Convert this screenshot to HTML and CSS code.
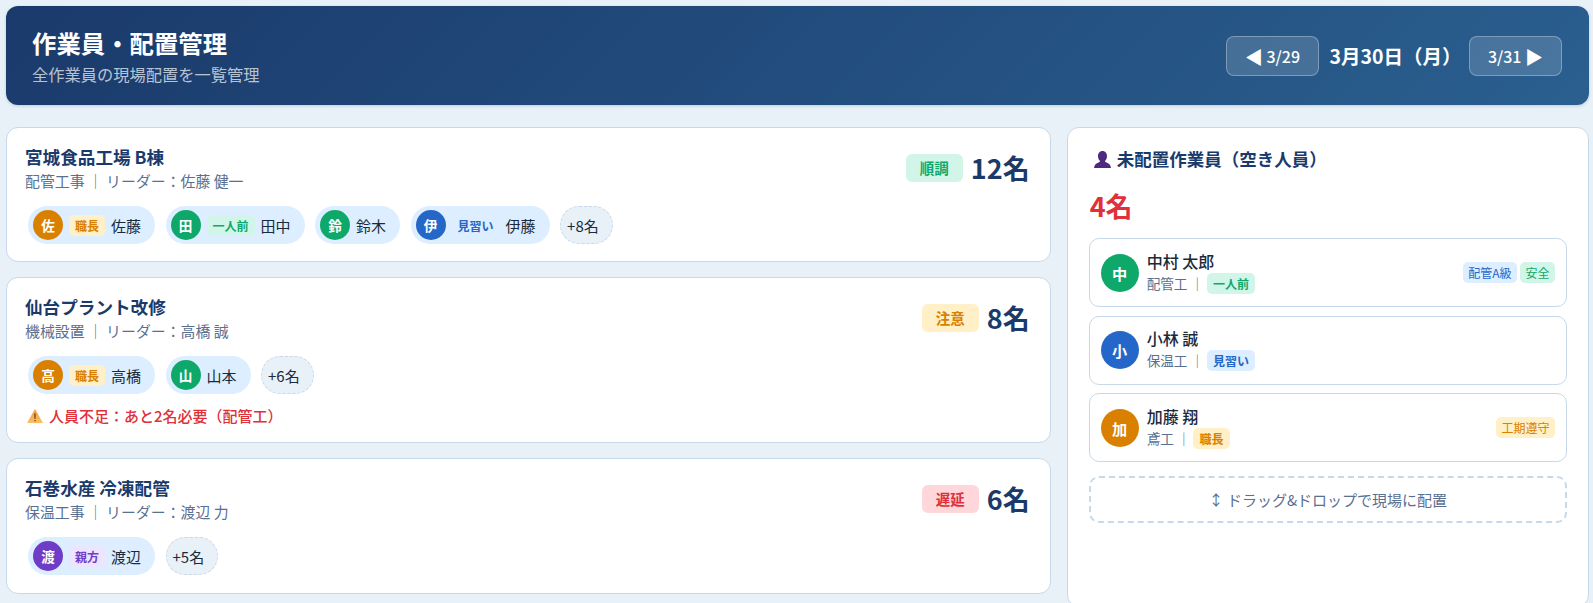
FILE: index.html
```html
<!DOCTYPE html>
<html lang="ja">
<head>
<meta charset="utf-8">
<title>作業員・配置管理</title>
<link rel="stylesheet" href="styles.css">
</head>
<body>
<header class="hero">
  <div class="hero-text">
    <h1>作業員・配置管理</h1>
    <p>全作業員の現場配置を一覧管理</p>
  </div>
  <div class="date-nav">
    <button class="nav-btn"><span class="arrow">◀</span> 3/29</button>
    <span class="date">3月30日（月）</span>
    <button class="nav-btn">3/31 <span class="arrow">▶</span></button>
  </div>
</header>
<main class="layout">
  <section class="sites">
    <article class="card">
      <div class="card-head">
        <div>
          <h2>宮城食品工場 B棟</h2>
          <p class="meta">配管工事 ｜ リーダー：佐藤 健一</p>
        </div>
        <div class="card-stat"><span class="status ok">順調</span><span class="count">12名</span></div>
      </div>
      <div class="chips">
        <div class="chip"><span class="ava amber">佐</span><span class="tag t-amber">職長</span><span>佐藤</span></div>
        <div class="chip"><span class="ava green">田</span><span class="tag t-green">一人前</span><span>田中</span></div>
        <div class="chip"><span class="ava green">鈴</span><span>鈴木</span></div>
        <div class="chip"><span class="ava blue">伊</span><span class="tag t-blue">見習い</span><span>伊藤</span></div>
        <div class="more">+8名</div>
      </div>
    </article>
    <article class="card">
      <div class="card-head">
        <div>
          <h2>仙台プラント改修</h2>
          <p class="meta">機械設置 ｜ リーダー：高橋 誠</p>
        </div>
        <div class="card-stat"><span class="status warn">注意</span><span class="count">8名</span></div>
      </div>
      <div class="chips">
        <div class="chip"><span class="ava amber">高</span><span class="tag t-amber">職長</span><span>高橋</span></div>
        <div class="chip"><span class="ava green">山</span><span>山本</span></div>
        <div class="more">+6名</div>
      </div>
      <p class="alert">
        <svg class="alert-icon" viewBox="0 0 16 14" aria-hidden="true"><defs><linearGradient id="warn" x1="0" y1="0" x2="0" y2="1"><stop offset="0" stop-color="#f59a3c"/><stop offset="1" stop-color="#fbbf63"/></linearGradient></defs><path d="M8 0 16 14H0z" fill="url(#warn)"/><path d="M7.300 4.500h1.400l-.2 5.500h-1zM7.400 11h1.200v1.300H7.400z" fill="#5a4020"/></svg>
        <span>人員不足：あと2名必要（配管工）</span>
      </p>
    </article>
    <article class="card">
      <div class="card-head">
        <div>
          <h2>石巻水産 冷凍配管</h2>
          <p class="meta">保温工事 ｜ リーダー：渡辺 力</p>
        </div>
        <div class="card-stat"><span class="status late">遅延</span><span class="count">6名</span></div>
      </div>
      <div class="chips">
        <div class="chip"><span class="ava purple">渡</span><span class="tag t-purple">親方</span><span>渡辺</span></div>
        <div class="more">+5名</div>
      </div>
    </article>
  </section>
  <aside class="panel">
    <h3 class="panel-title">
      <svg class="bust" viewBox="0 0 17 17" aria-hidden="true"><path d="M8.500 0C11.200 0 13 2.200 13 5 13 7.200 12.200 8.900 11 10 11 10.800 11.600 11.200 13 11.700 15.200 12.500 16.600 13.800 17 17H0C.4 13.800 1.800 12.500 4 11.700 5.400 11.200 6 10.800 6 10 4.800 8.900 4 7.200 4 5 4 2.200 5.800 0 8.500 0z" fill="#4d2a80"/></svg>
      <span>未配置作業員（空き人員）</span>
    </h3>
    <div class="free-count">4名</div>
    <div class="workers">
      <div class="worker">
        <span class="ava lg green">中</span>
        <div class="worker-info">
          <div class="worker-name">中村 太郎</div>
          <div class="worker-meta"><span>配管工 ｜</span><span class="tag t-green">一人前</span></div>
        </div>
        <div class="skills"><span class="tag skill t-blue">配管A級</span><span class="tag skill t-green">安全</span></div>
      </div>
      <div class="worker">
        <span class="ava lg blue">小</span>
        <div class="worker-info">
          <div class="worker-name">小林 誠</div>
          <div class="worker-meta"><span>保温工 ｜</span><span class="tag t-blue">見習い</span></div>
        </div>
      </div>
      <div class="worker">
        <span class="ava lg amber">加</span>
        <div class="worker-info">
          <div class="worker-name">加藤 翔</div>
          <div class="worker-meta"><span>鳶工 ｜</span><span class="tag t-amber">職長</span></div>
        </div>
        <div class="skills"><span class="tag skill t-amber">工期遵守</span></div>
      </div>
    </div>
    <div class="dropzone">↕ ドラッグ&amp;ドロップで現場に配置</div>
  </aside>
</main>
</body>
</html>
```
FILE: styles.css
```css
* { box-sizing: border-box; }
html, body { height: 100%; }
body {
  margin: 0;
  padding: 6px 4px 0 6px;
  background: #e8f0f8;
  color: #1a2a3a;
  font-family: "Noto Sans CJK JP", "Noto Sans", sans-serif;
  overflow: hidden;
}
h1, h2, h3, p { margin: 0; }

.hero {
  display: flex;
  align-items: center;
  justify-content: space-between;
  height: 99px;
  padding: 0 27px 0 26px;
  margin-bottom: 22px;
  border-radius: 12px;
  background: linear-gradient(135deg, #1a3a6b, #2a5f8f);
  color: #fff;
  box-shadow: 0 1px 3px rgba(26, 58, 107, .2);
}
.hero-text { padding-top: 2px; }
.hero h1 { font-size: 24.400px; line-height: 30px; font-weight: 700; }
.hero p { margin-top: 4px; font-size: 16.250px; line-height: 24px; color: rgba(255, 255, 255, .7); }
.date-nav { display: flex; align-items: center; gap: 7.500px; }
.nav-btn {
  width: 93px;
  height: 40px;
  padding: 0;
  border: 1px solid rgba(255, 255, 255, .3);
  border-radius: 8px;
  background: rgba(255, 255, 255, .15);
  color: #fff;
  font: 500 16px "Noto Sans CJK JP", sans-serif;
}
.arrow { font-size: 18px; line-height: 1; vertical-align: -1px; }
.date { margin-left: 3px; font-size: 19.500px; font-weight: 700; }

.layout {
  display: grid;
  grid-template-columns: 2fr 1fr;
  gap: 16px;
}
.sites { display: flex; flex-direction: column; gap: 15px; }
.card, .panel {
  background: #fff;
  border: 1px solid #c8d8e8;
  border-radius: 12px;
}
.card { padding: 17px 18px; }
.card:last-child { padding-bottom: 18px; }
.card-head { display: flex; justify-content: space-between; align-items: flex-start; }
.card h2 { font-size: 17.600px; line-height: 24px; font-weight: 700; color: #1a3a6b; }
.meta { margin-top: 1px; font-size: 14.900px; line-height: 22px; color: #5a7090; }
.card-stat { display: flex; align-items: center; gap: 8px; margin: 4px 2px 0 0; }
.status {
  padding: 3px 14px;
  border-radius: 6px;
  font-size: 14.500px;
  line-height: 22px;
  font-weight: 700;
}
.status.ok { background: #d1f5e8; color: #0fa86b; }
.status.warn { background: #fff0c8; color: #d98000; }
.status.late { background: #ffd6d9; color: #e0303a; }
.count { font-size: 27px; line-height: 38px; font-weight: 700; color: #1a3a6b; }

.chips { display: flex; align-items: center; gap: 10.500px; margin: 14px 0 0 3px; font-size: 15px; }
.chip {
  display: flex;
  align-items: center;
  gap: 6px;
  height: 38px;
  padding: 0 14px 0 5px;
  border-radius: 19px;
  background: #dceeff;
}
.more {
  display: flex;
  align-items: center;
  height: 38px;
  padding: 0 13px 0 6px;
  border: 1px dashed #c8d8e8;
  border-radius: 19px;
  background: #e8f0f8;
}
.ava {
  display: flex;
  align-items: center;
  justify-content: center;
  flex: none;
  width: 30px;
  height: 30px;
  border-radius: 50%;
  color: #fff;
  font-size: 13.600px;
  font-weight: 700;
}
.ava.lg { width: 38px; height: 38px; font-size: 15.200px; }
.amber { background: #d98000; }
.green { background: #0fa86b; }
.blue { background: #2567c8; }
.purple { background: #6f3cc8; }
.tag {
  padding: 2px 6px;
  border-radius: 5px;
  font-size: 12px;
  line-height: 17px;
  font-weight: 700;
}
.t-amber { background: #fff0c8; color: #d98000; }
.t-green { background: #d1f5e8; color: #0fa86b; }
.t-blue { background: #dceeff; color: #2567c8; }
.t-purple { background: #ede5ff; color: #6f3cc8; }
.alert {
  display: flex;
  align-items: center;
  gap: 6px;
  margin: 12px 0 0 2px;
  font-size: 15px;
  line-height: 19px;
  font-weight: 500;
  color: #e0303a;
}
.alert-icon { width: 16px; height: 14px; }

.panel { padding: 18px 21px; min-height: 480px; }
.panel-title {
  display: flex;
  align-items: center;
  gap: 6px;
  margin: 1px 0 0 5px;
  font-size: 17.500px;
  line-height: 24px;
  font-weight: 700;
  color: #1a3a6b;
}
.bust { width: 17px; height: 17px; }
.free-count { margin: 16px 0 0 1px; font-size: 27px; line-height: 38px; font-weight: 700; color: #e0303a; }
.workers { display: flex; flex-direction: column; gap: 8.500px; margin-top: 13px; }
.worker {
  display: flex;
  align-items: center;
  gap: 8px;
  height: 69px;
  padding: 0 11px;
  border: 1px solid #c8d8e8;
  border-radius: 10px;
}
.worker-info { flex: 1; padding-bottom: 2px; }
.worker-name { font-size: 16px; line-height: 22px; font-weight: 500; }
.worker-meta {
  display: flex;
  align-items: center;
  gap: 3px;
  margin-top: 1px;
  font-size: 13.600px;
  line-height: 21px;
  color: #5a7090;
}
.skills { display: flex; gap: 3px; }
.skill { padding: 2px 5.500px; font-weight: 400; }
.dropzone {
  margin-top: 14px;
  height: 47px;
  display: flex;
  align-items: center;
  justify-content: center;
  border: 2px dashed #c8d8e8;
  border-radius: 10px;
  font-size: 15px;
  color: #5a7090;
}
```
